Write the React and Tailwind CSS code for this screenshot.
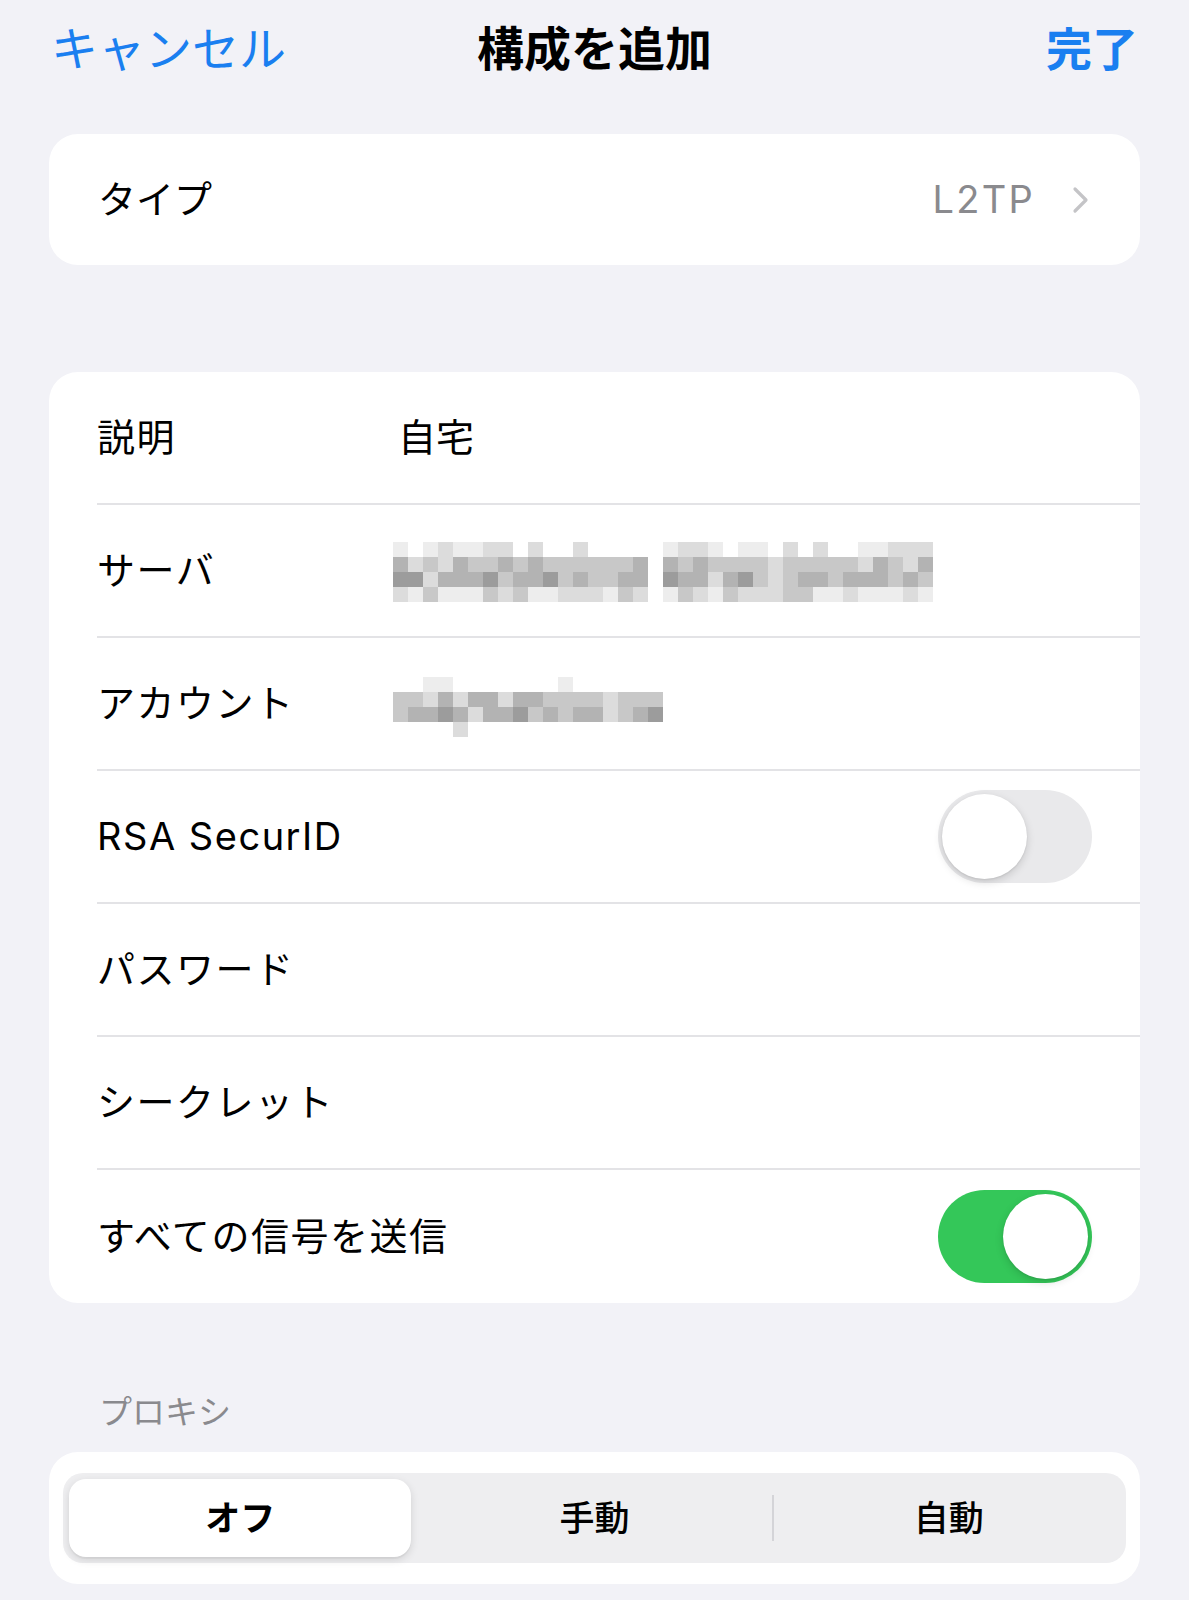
import React from 'react';

const FONT = { fontFamily: 'Inter, "Noto Sans CJK JP", sans-serif' };

// gray levels for the pixelated (censored) values
const SHADES = [
  'bg-transparent',
  'bg-[#ededed]',
  'bg-[#dcdcdc]',
  'bg-[#c8c8c8]',
  'bg-[#b3b3b3]',
  'bg-[#9c9c9c]',
];

const makeGrid = (cols, seed, rowPools, gaps = []) => {
  let s = seed;
  const rnd = () => {
    s = (s * 1103515245 + 12345) % 2147483648;
    return s / 2147483648;
  };
  return rowPools.map((pool) =>
    Array.from({ length: cols }, (_, c) => {
      if (gaps.includes(c)) return 0;
      return pool[Math.floor(rnd() * pool.length)];
    })
  );
};

const Mosaic = ({ grid }) => (
  <div className="flex flex-col">
    {grid.map((row, r) => (
      <div key={r} className="flex">
        {row.map((lvl, c) => (
          <div key={c} className={`w-[15px] h-[15px] ${SHADES[lvl]}`} />
        ))}
      </div>
    ))}
  </div>
);

const serverGrid = makeGrid(
  36,
  7,
  [
    [0, 0, 1, 1, 2],
    [2, 3, 3, 4, 4],
    [3, 4, 4, 5, 3, 2],
    [1, 1, 2, 1, 2, 3],
  ],
  [17]
);

const accountGrid = makeGrid(18, 3, [
  [0, 0, 0, 0, 1],
  [2, 3, 3, 4],
  [3, 4, 5, 4, 2],
  [0, 0, 0, 0, 0, 0, 0, 1],
]);
accountGrid[3][4] = 2;

const Toggle = ({ on }) => (
  <div
    className={`w-[154px] h-[93px] rounded-full p-[4px] flex ${
      on ? 'bg-[#34c759] justify-end' : 'bg-[#e9e9eb] justify-start'
    }`}
  >
    <div className="w-[85px] h-[85px] rounded-full bg-white shadow-[0_3px_8px_rgba(0,0,0,0.15),0_1px_2px_rgba(0,0,0,0.08)]" />
  </div>
);

const Row = ({ label, children, last }) => (
  <div className="pl-[48px]">
    <div
      className={`h-[133px] flex items-center pr-[48px] ${
        last ? '' : 'border-b-2 border-[#e3e3e6]'
      }`}
    >
      <span className="min-w-[301px] shrink-0 whitespace-nowrap text-[38px] tracking-[0.04em] text-black">{label}</span>
      <div className="flex-1 flex items-center">{children}</div>
    </div>
  </div>
);

export default function App() {
  return (
    <div className="min-h-[1600px] bg-[#f2f2f7] px-[49px]" style={FONT}>
      {/* nav bar */}
      <div className="grid grid-cols-[1fr_auto_1fr] items-center h-[98px] -mx-[49px] px-[51px]">
        <span className="justify-self-start text-[47px] text-[#1a7ff0]">キャンセル</span>
        <span className="text-[47px] font-bold text-black">構成を追加</span>
        <span className="justify-self-end text-[46px] font-bold text-[#1a7ff0]">完了</span>
      </div>

      {/* type */}
      <div className="mt-[36px] bg-white rounded-[29px] h-[131px] flex items-center pl-[49px] pr-[49px]">
        <span className="text-[38px] text-black">タイプ</span>
        <div className="ml-auto flex items-center gap-[36px]">
          <span className="text-[38px] tracking-[0.06em] text-[#8a8a8e]">L2TP</span>
          <svg width="20" height="28" viewBox="0 0 20 28" fill="none">
            <path d="M4 3 L15 14 L4 25" stroke="#c4c4c7" strokeWidth="3.2" strokeLinecap="round" strokeLinejoin="round" />
          </svg>
        </div>
      </div>

      {/* settings */}
      <div className="mt-[107px] bg-white rounded-[29px] overflow-hidden">
        <Row label="説明">
          <span className="text-[38px] text-black">自宅</span>
        </Row>
        <Row label="サーバ">
          <div className="-ml-[5px] mt-[2px]">
            <Mosaic grid={serverGrid} />
          </div>
        </Row>
        <Row label="アカウント">
          <div className="-ml-[5px] mt-[6px]">
            <Mosaic grid={accountGrid} />
          </div>
        </Row>
        <Row label="RSA SecurID">
          <div className="ml-auto">
            <Toggle on={false} />
          </div>
        </Row>
        <Row label="パスワード" />
        <Row label="シークレット" />
        <Row label="すべての信号を送信" last>
          <div className="ml-auto">
            <Toggle on />
          </div>
        </Row>
      </div>

      {/* proxy */}
      <div className="mt-[93px] pl-[50px] text-[33px] text-[#8a8a8e] leading-none">プロキシ</div>
      <div className="mt-[23px] bg-white rounded-[29px] px-[14px] py-[21px]">
        <div className="h-[90px] rounded-[20px] bg-[#eeeef0] grid grid-cols-3">
          <div className="p-[6px]">
            <div className="h-full rounded-[17px] bg-white shadow-[0_3px_8px_rgba(0,0,0,0.12),0_2px_1px_rgba(0,0,0,0.04)] flex items-center justify-center text-[35px] font-semibold text-black">
              オフ
            </div>
          </div>
          <div className="flex items-center justify-center text-[35px] font-medium text-black">
            手動
          </div>
          <div className="flex items-center justify-center relative text-[35px] font-medium text-black">
            <div className="absolute left-0 top-[22px] bottom-[22px] w-[2px] bg-[#d4d4d8]" />
            自動
          </div>
        </div>
      </div>
    </div>
  );
}
